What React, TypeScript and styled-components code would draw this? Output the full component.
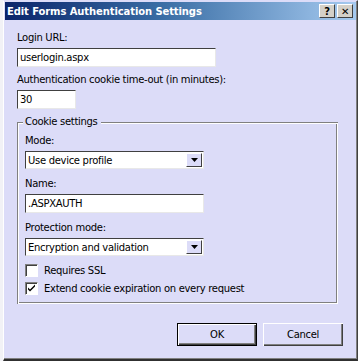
import React from "react";
import styled, { createGlobalStyle } from "styled-components";

const GlobalStyle = createGlobalStyle`
  html, body {
    margin: 0;
    padding: 0;
    background: #f2f2f6;
  }
  body {
    font-family: "DejaVu Sans", sans-serif;
    font-size: 10px;
    letter-spacing: -0.3px;
  }
`;

const Page = styled.div`
  width: 358px;
  height: 361px;
  display: flex;
  padding-left: 3px;
  box-sizing: border-box;
  background: #f2f2f6;
`;

const Window = styled.div`
  flex: 1;
  display: flex;
  flex-direction: column;
  background: #dcdcf8;
  border-top: 1px solid #dcdcf8;
  border-left: 1px solid #ffffff;
  border-right: 1px solid #404040;
  border-bottom: 2px solid #303030;
  box-shadow: inset -1px -1px 0 #808080;
`;

const TitleBar = styled.div`
  height: 18px;
  margin: 1px 1px 0 1px;
  display: flex;
  align-items: center;
  padding: 0 3px 0 2px;
  background: linear-gradient(to right, #0a246a 0%, #3a6ea5 45%, #a6caf0 100%);
`;

const Title = styled.div`
  flex: 1;
  color: #ffffff;
  font-weight: bold;
  font-size: 10px;
  letter-spacing: -0.1px;
`;

const TitleButton = styled.div`
  width: 16px;
  height: 14px;
  margin-left: 2px;
  box-sizing: border-box;
  background: #d4d0c8;
  border-top: 1px solid #ffffff;
  border-left: 1px solid #ffffff;
  border-right: 1px solid #404040;
  border-bottom: 1px solid #404040;
  display: flex;
  align-items: center;
  justify-content: center;
  font-weight: bold;
  font-size: 10px;
  color: #000;
`;

const Body = styled.div`
  flex: 1;
  display: flex;
  flex-direction: column;
  padding: 11px 14px 0 13px;
`;

const Label = styled.div`
  color: #000;
  height: 14px;
  line-height: 14px;
  margin-bottom: 3px;
`;

const TextBox = styled.div<{ $w: number; $gap: number }>`
  width: ${(p) => p.$w}px;
  height: 19px;
  box-sizing: border-box;
  background: #fff;
  border-top: 1px solid #404040;
  border-left: 1px solid #404040;
  border-right: 1px solid #e8e8e8;
  border-bottom: 1px solid #e8e8e8;
  line-height: 17px;
  padding-left: 2px;
  margin-bottom: ${(p) => p.$gap}px;
`;

const Select = styled.div`
  width: 179px;
  height: 18px;
  box-sizing: border-box;
  background: #fff;
  border-top: 1px solid #404040;
  border-left: 1px solid #404040;
  border-right: 1px solid #e8e8e8;
  border-bottom: 1px solid #e8e8e8;
  display: flex;
  align-items: center;
  margin-bottom: 8px;
`;

const SelectText = styled.div`
  flex: 1;
  padding-left: 2px;
`;

const Arrow = styled.div`
  width: 16px;
  height: 14px;
  margin-right: 1px;
  box-sizing: border-box;
  background: #dcdcf8;
  border-top: 1px solid #ffffff;
  border-left: 1px solid #ffffff;
  border-right: 1px solid #404040;
  border-bottom: 1px solid #404040;
  display: flex;
  align-items: center;
  justify-content: center;
`;

const Group = styled.div`
  position: relative;
  margin-top: 7px;
  width: 321px;
  height: 182px;
  box-sizing: border-box;
  padding: 12px 0 0 8px;
  display: flex;
  flex-direction: column;
  box-shadow: inset 1px 1px 0 #808080, inset 2px 2px 0 #ffffff, inset -1px -1px 0 #ffffff,
    inset -2px -2px 0 #808080;
`;

const Legend = styled.div`
  position: absolute;
  top: -7px;
  left: 6px;
  height: 14px;
  line-height: 14px;
  padding: 0 3px 0 2px;
  background: #dcdcf8;
`;

const CheckRow = styled.div`
  display: flex;
  align-items: center;
  height: 13px;
  margin-bottom: 5px;
`;

const Box = styled.div`
  width: 13px;
  height: 13px;
  box-sizing: border-box;
  background: #fff;
  border-top: 1px solid #808080;
  border-left: 1px solid #808080;
  border-right: 1px solid #ffffff;
  border-bottom: 1px solid #ffffff;
  box-shadow: inset 1px 1px 0 #404040;
  margin-right: 6px;
  display: flex;
  align-items: center;
  justify-content: center;
`;

const Footer = styled.div`
  display: flex;
  justify-content: flex-end;
  gap: 6px;
  margin-top: 19px;
`;

const Button = styled.div<{ $default?: boolean }>`
  width: 80px;
  height: 23px;
  box-sizing: border-box;
  display: flex;
  align-items: center;
  justify-content: center;
  background: #dcdcf8;
  border: ${(p) => (p.$default ? "1px solid #000" : "none")};
  box-shadow: inset 1px 1px 0 #ffffff, inset -1px -1px 0 #404040, inset -2px -2px 0 #808080;
`;

const DownArrow = () => (
  <svg width="7" height="4" viewBox="0 0 7 4">
    <path d="M0 0h7L3.5 4z" fill="#000" />
  </svg>
);

const Tick = () => (
  <svg width="9" height="9" viewBox="0 0 9 9">
    <path d="M1 3.5l2 2 5-5v2l-5 5-2-2z" fill="#000" />
  </svg>
);

export default function App() {
  return (
    <>
      <GlobalStyle />
      <Page>
        <Window>
          <TitleBar>
            <Title>Edit Forms Authentication Settings</Title>
            <TitleButton>?</TitleButton>
            <TitleButton>✕</TitleButton>
          </TitleBar>
          <Body>
            <Label>Login URL:</Label>
            <TextBox $w={199} $gap={6}>userlogin.aspx</TextBox>
            <Label>Authentication cookie time-out (in minutes):</Label>
            <TextBox $w={59} $gap={6}>30</TextBox>
            <Group>
              <Legend>Cookie settings</Legend>
              <Label>Mode:</Label>
              <Select>
                <SelectText>Use device profile</SelectText>
                <Arrow>
                  <DownArrow />
                </Arrow>
              </Select>
              <Label>Name:</Label>
              <TextBox $w={179} $gap={8}>.ASPXAUTH</TextBox>
              <Label>Protection mode:</Label>
              <Select>
                <SelectText>Encryption and validation</SelectText>
                <Arrow>
                  <DownArrow />
                </Arrow>
              </Select>
              <CheckRow>
                <Box />
                <span>Requires SSL</span>
              </CheckRow>
              <CheckRow>
                <Box>
                  <Tick />
                </Box>
                <span>Extend cookie expiration on every request</span>
              </CheckRow>
            </Group>
            <Footer>
              <Button $default>OK</Button>
              <Button>Cancel</Button>
            </Footer>
          </Body>
        </Window>
      </Page>
    </>
  );
}
